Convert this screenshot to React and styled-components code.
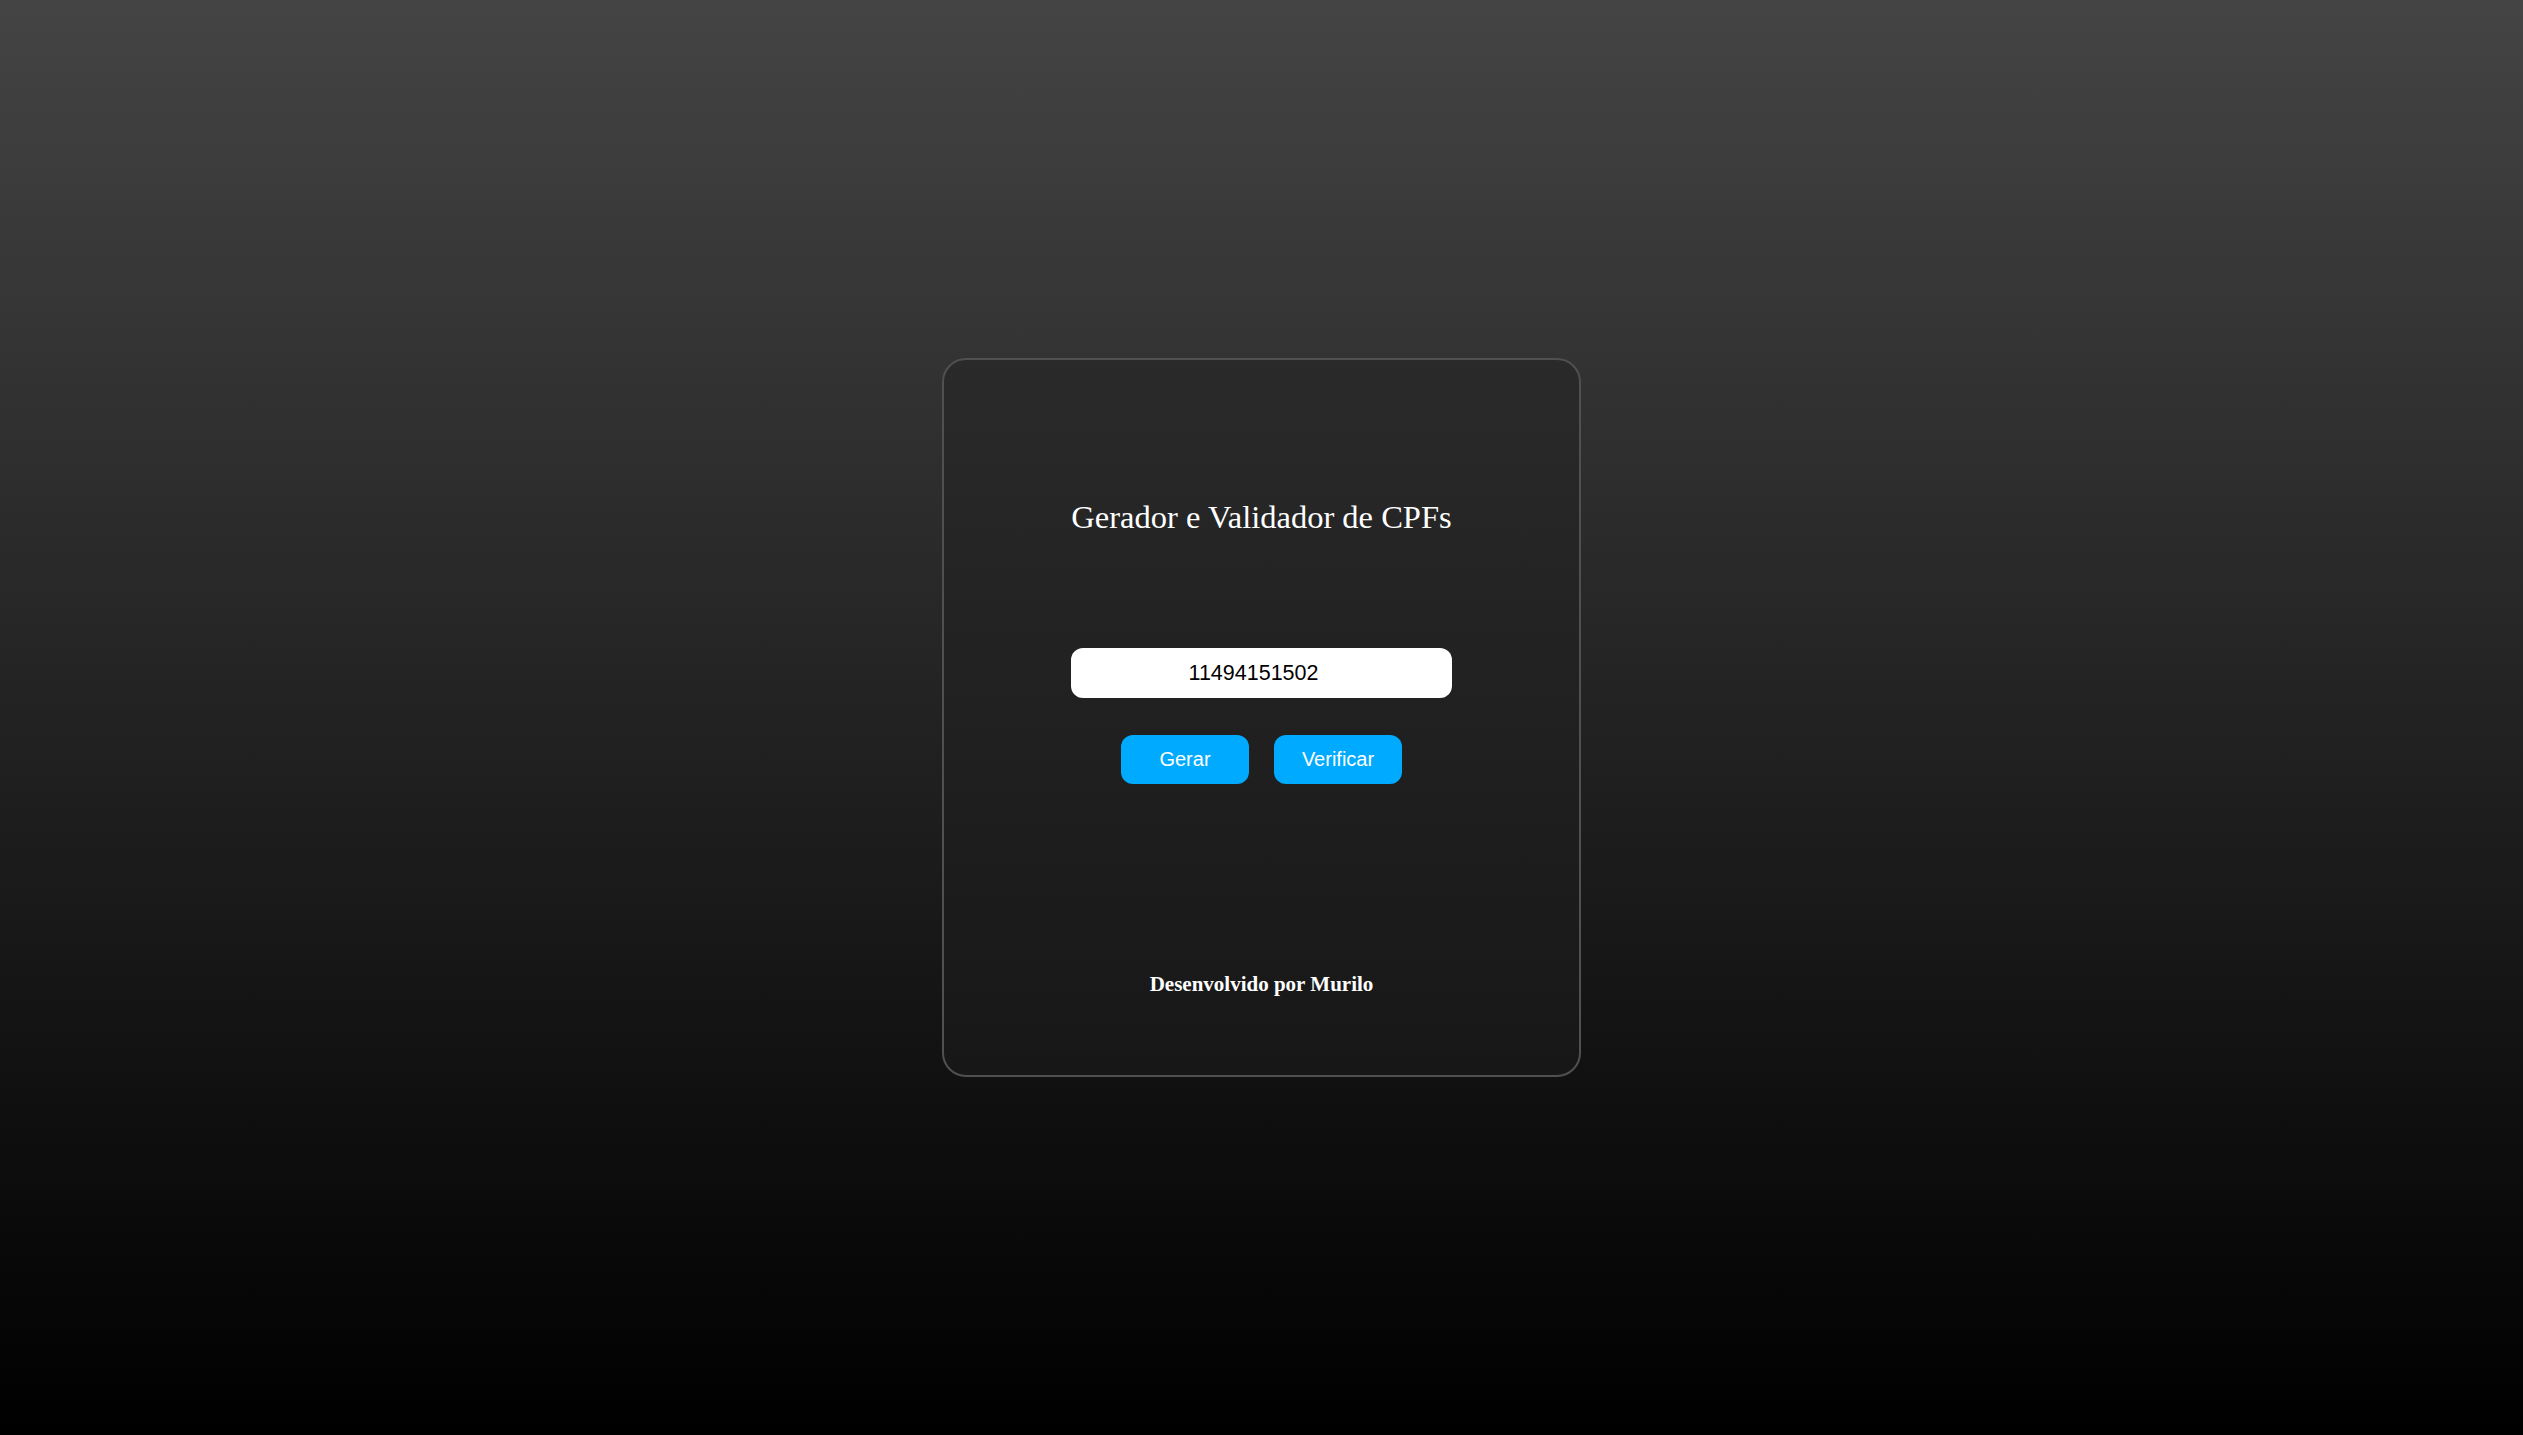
import { useState } from "react";
import styled, { createGlobalStyle } from "styled-components";

const GlobalStyle = createGlobalStyle`
  * {
    box-sizing: border-box;
  }
  html, body {
    margin: 0;
    padding: 0;
  }
  body {
    min-height: 100vh;
    background: linear-gradient(to bottom, #444444, #000000);
    font-family: "Liberation Serif", "Times New Roman", serif;
    color: #ffffff;
  }
`;

const Page = styled.main`
  display: flex;
  align-items: center;
  justify-content: center;
  height: 100vh;
`;

const Card = styled.section`
  width: 639px;
  height: 719px;
  display: flex;
  flex-direction: column;
  align-items: center;
  padding: 139px 0 0;
  border: 2px solid #505050;
  border-radius: 24px;
  background: linear-gradient(to bottom, #2a2a2a, #171717);
`;

const Title = styled.h1`
  margin: 0 0 112px;
  font-size: 32.5px;
  font-weight: 400;
  line-height: normal;
  color: #ffffff;
`;

const CpfInput = styled.input`
  width: 381px;
  height: 50px;
  padding: 0 16px 0 0;
  border: none;
  border-radius: 12px;
  background: #ffffff;
  color: #000000;
  font-family: "Liberation Sans", Arial, sans-serif;
  font-size: 21.5px;
  text-align: center;
  outline: none;
`;

const Actions = styled.div`
  display: flex;
  gap: 25px;
  margin-top: 37px;
`;

const Button = styled.button`
  width: 128px;
  height: 49px;
  border: none;
  border-radius: 12px;
  background: #00aaff;
  color: #ffffff;
  font-family: "Liberation Sans", Arial, sans-serif;
  font-size: 20px;
  cursor: pointer;
`;

const Footer = styled.p`
  margin: 188px 0 0;
  font-size: 21px;
  font-weight: 700;
  line-height: normal;
`;

const App = () => {
  const [cpf, setCpf] = useState("11494151502");

  return (
    <>
      <GlobalStyle />
      <Page>
        <Card>
          <Title>Gerador e Validador de CPFs</Title>
          <CpfInput value={cpf} onChange={(e) => setCpf(e.target.value)} />
          <Actions>
            <Button>Gerar</Button>
            <Button>Verificar</Button>
          </Actions>
          <Footer>Desenvolvido por Murilo</Footer>
        </Card>
      </Page>
    </>
  );
};

export default App;
